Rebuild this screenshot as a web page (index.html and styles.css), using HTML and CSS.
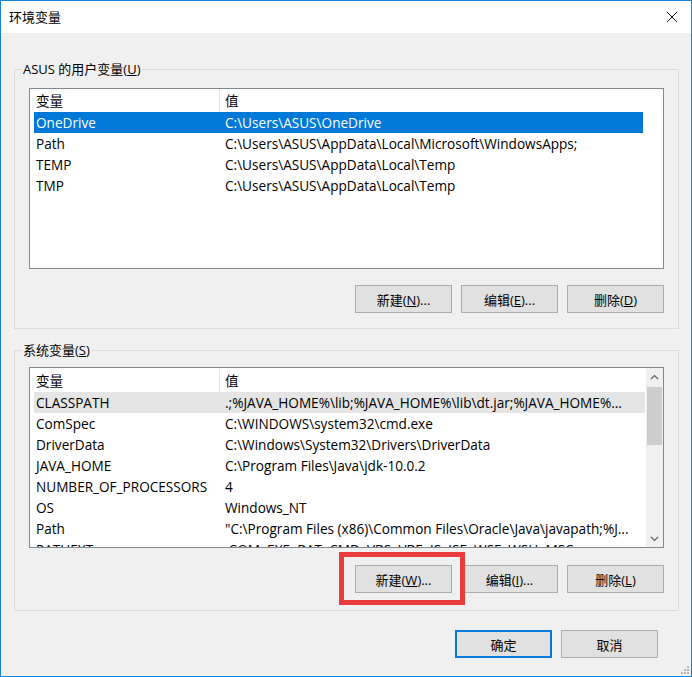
FILE: index.html
```html
<!DOCTYPE html>
<html lang="zh-CN">
<head>
<meta charset="utf-8">
<title>环境变量</title>
<link rel="stylesheet" href="styles.css">
</head>
<body>
<div class="window">
  <div class="titlebar">
    <span class="title">环境变量</span>
    <svg class="close" width="12" height="12" viewBox="0 0 12 12"><path d="M1 1 L11 11 M11 1 L1 11" stroke="#1a1a1a" stroke-width="1" fill="none"/></svg>
  </div>

  <div class="group g-user">
    <div class="legend">ASUS 的用户变量(<u>U</u>)</div>
    <div class="list">
      <div class="list-body">
        <div class="head"><span class="h1">变量</span><span class="h2">值</span></div>
        <div class="row sel"><span class="c1">OneDrive</span><span class="c2">C:\Users\ASUS\OneDrive</span></div>
        <div class="row"><span class="c1">Path</span><span class="c2">C:\Users\ASUS\AppData\Local\Microsoft\WindowsApps;</span></div>
        <div class="row"><span class="c1">TEMP</span><span class="c2">C:\Users\ASUS\AppData\Local\Temp</span></div>
        <div class="row"><span class="c1">TMP</span><span class="c2">C:\Users\ASUS\AppData\Local\Temp</span></div>
      </div>
    </div>
    <div class="btns">
      <button class="btn">新建(<u>N</u>)...</button>
      <button class="btn">编辑(<u>E</u>)...</button>
      <button class="btn">删除(<u>D</u>)</button>
    </div>
  </div>

  <div class="group g-sys">
    <div class="legend">系统变量(<u>S</u>)</div>
    <div class="list">
      <div class="list-body wide">
        <div class="head"><span class="h1">变量</span><span class="h2">值</span></div>
        <div class="row hover"><span class="c1">CLASSPATH</span><span class="c2">.;%JAVA_HOME%\lib;%JAVA_HOME%\lib\dt.jar;%JAVA_HOME%...</span></div>
        <div class="row"><span class="c1">ComSpec</span><span class="c2">C:\WINDOWS\system32\cmd.exe</span></div>
        <div class="row"><span class="c1">DriverData</span><span class="c2">C:\Windows\System32\Drivers\DriverData</span></div>
        <div class="row"><span class="c1">JAVA_HOME</span><span class="c2">C:\Program Files\Java\jdk-10.0.2</span></div>
        <div class="row"><span class="c1">NUMBER_OF_PROCESSORS</span><span class="c2">4</span></div>
        <div class="row"><span class="c1">OS</span><span class="c2">Windows_NT</span></div>
        <div class="row"><span class="c1">Path</span><span class="c2">"C:\Program Files (x86)\Common Files\Oracle\Java\javapath;%J...</span></div>
        <div class="row"><span class="c1">PATHEXT</span><span class="c2">.COM;.EXE;.BAT;.CMD;.VBS;.VBE;.JS;.JSE;.WSF;.WSH;.MSC</span></div>
      </div>
      <div class="scrollbar">
        <svg class="arrow" width="9" height="6" viewBox="0 0 9 6"><path d="M1 5 L4.5 1.5 L8 5" stroke="#606060" stroke-width="1.2" fill="none"/></svg>
        <div class="track"><div class="thumb"></div></div>
        <svg class="arrow" width="9" height="6" viewBox="0 0 9 6"><path d="M1 1 L4.5 4.5 L8 1" stroke="#606060" stroke-width="1.2" fill="none"/></svg>
      </div>
    </div>
    <div class="btns">
      <span class="mark"><button class="btn">新建(<u>W</u>)...</button></span>
      <button class="btn">编辑(<u>I</u>)...</button>
      <button class="btn">删除(<u>L</u>)</button>
    </div>
  </div>

  <div class="footer">
    <button class="btn default">确定</button>
    <button class="btn">取消</button>
  </div>

  <svg class="grip" width="8" height="8" viewBox="0 0 8 8">
    <rect x="6" y="0" width="2" height="2" fill="#b8b8b8"/>
    <rect x="3" y="3" width="2" height="2" fill="#b8b8b8"/>
    <rect x="6" y="3" width="2" height="2" fill="#b8b8b8"/>
    <rect x="0" y="6" width="2" height="2" fill="#b8b8b8"/>
    <rect x="3" y="6" width="2" height="2" fill="#b8b8b8"/>
    <rect x="6" y="6" width="2" height="2" fill="#b8b8b8"/>
  </svg>
</div>
</body>
</html>
```

FILE: styles.css
```css
* { box-sizing: border-box; }

html, body {
  margin: 0;
  padding: 0;
  background: #ffffff;
}

body {
  font-family: "Open Sans", "Noto Sans CJK SC", sans-serif;
  font-size: 13px;
  color: #000;
}

.window {
  position: relative;
  width: 692px;
  height: 677px;
  border: 1px solid #1883d7;
  background: #f0f0f0;
  overflow: hidden;
}

.titlebar {
  height: 32px;
  background: #ffffff;
  display: flex;
  align-items: center;
  justify-content: space-between;
  padding: 0 13px 0 8px;
}

.title {
  font-size: 13px;
  line-height: 18px;
}

.close { display: block; }

.group {
  position: relative;
  width: 665px;
  margin-left: 13px;
  border: 1px solid #dcdcdc;
  padding: 0 14px;
}

.g-user {
  margin-top: 36px;
  padding-top: 18px;
  padding-bottom: 15px;
}

.g-sys {
  margin-top: 21px;
  padding-top: 16px;
  padding-bottom: 17px;
}

.legend {
  position: absolute;
  top: -10px;
  left: 7px;
  padding: 0 1px;
  line-height: 18px;
  background: #f0f0f0;
}

.list {
  display: flex;
  width: 635px;
  height: 181px;
  border: 1px solid #828790;
  background: #ffffff;
  overflow: hidden;
}

.list-body {
  flex: 1;
  overflow: hidden;
  font-size: 13.6px;
}

.wide { padding-top: 1px; }

.head {
  display: flex;
  height: 23px;
  line-height: 24px;
  white-space: nowrap;
}

.h1 {
  width: 190px;
  padding-left: 6px;
  border-right: 1px solid #e5e5e5;
}

.h2 { padding-left: 5px; }

.row {
  display: flex;
  width: 609px;
  height: 21px;
  line-height: 22px;
  margin-left: 4px;
  white-space: nowrap;
}

.wide .row { width: 611px; }

.c1 {
  width: 186px;
  flex: none;
  padding-left: 2px;
  overflow: hidden;
}

.c2 {
  flex: 1;
  padding-left: 5px;
  overflow: hidden;
}

.row.sel {
  background: #0078d7;
  color: #ffffff;
}

.row.hover { background: #e5e5e5; }

.scrollbar {
  width: 17px;
  flex: none;
  background: #f0f0f0;
  display: flex;
  flex-direction: column;
  align-items: center;
}

.arrow {
  display: block;
  margin: 6px 0 5px;
}

.track {
  flex: 1;
  width: 100%;
  padding: 0 1px;
}

.thumb {
  height: 58px;
  margin-top: 2px;
  background: #cdcdcd;
}

.btns {
  display: flex;
  justify-content: flex-end;
  gap: 9px;
}

.g-user .btns { margin-top: 16px; }
.g-sys .btns { margin-top: 17px; }

.btn {
  width: 97px;
  height: 28px;
  font-family: "Open Sans", "Noto Sans CJK SC", sans-serif;
  font-size: 13px;
  color: #000;
  background: #e1e1e1;
  border: 1px solid #adadad;
  padding: 0;
  margin: 0;
  display: block;
}

.btn.default {
  border: 2px solid #0078d7;
}

.mark {
  position: relative;
  display: block;
}

.mark::after {
  content: "";
  position: absolute;
  top: -13px;
  left: -16px;
  right: -13px;
  bottom: -12px;
  border: 5px solid #ea3c40;
  pointer-events: none;
}

.footer {
  display: flex;
  justify-content: flex-end;
  gap: 9px;
  margin-top: 19px;
  padding-right: 33px;
}

.grip {
  position: absolute;
  right: 2px;
  bottom: 2px;
}
```
